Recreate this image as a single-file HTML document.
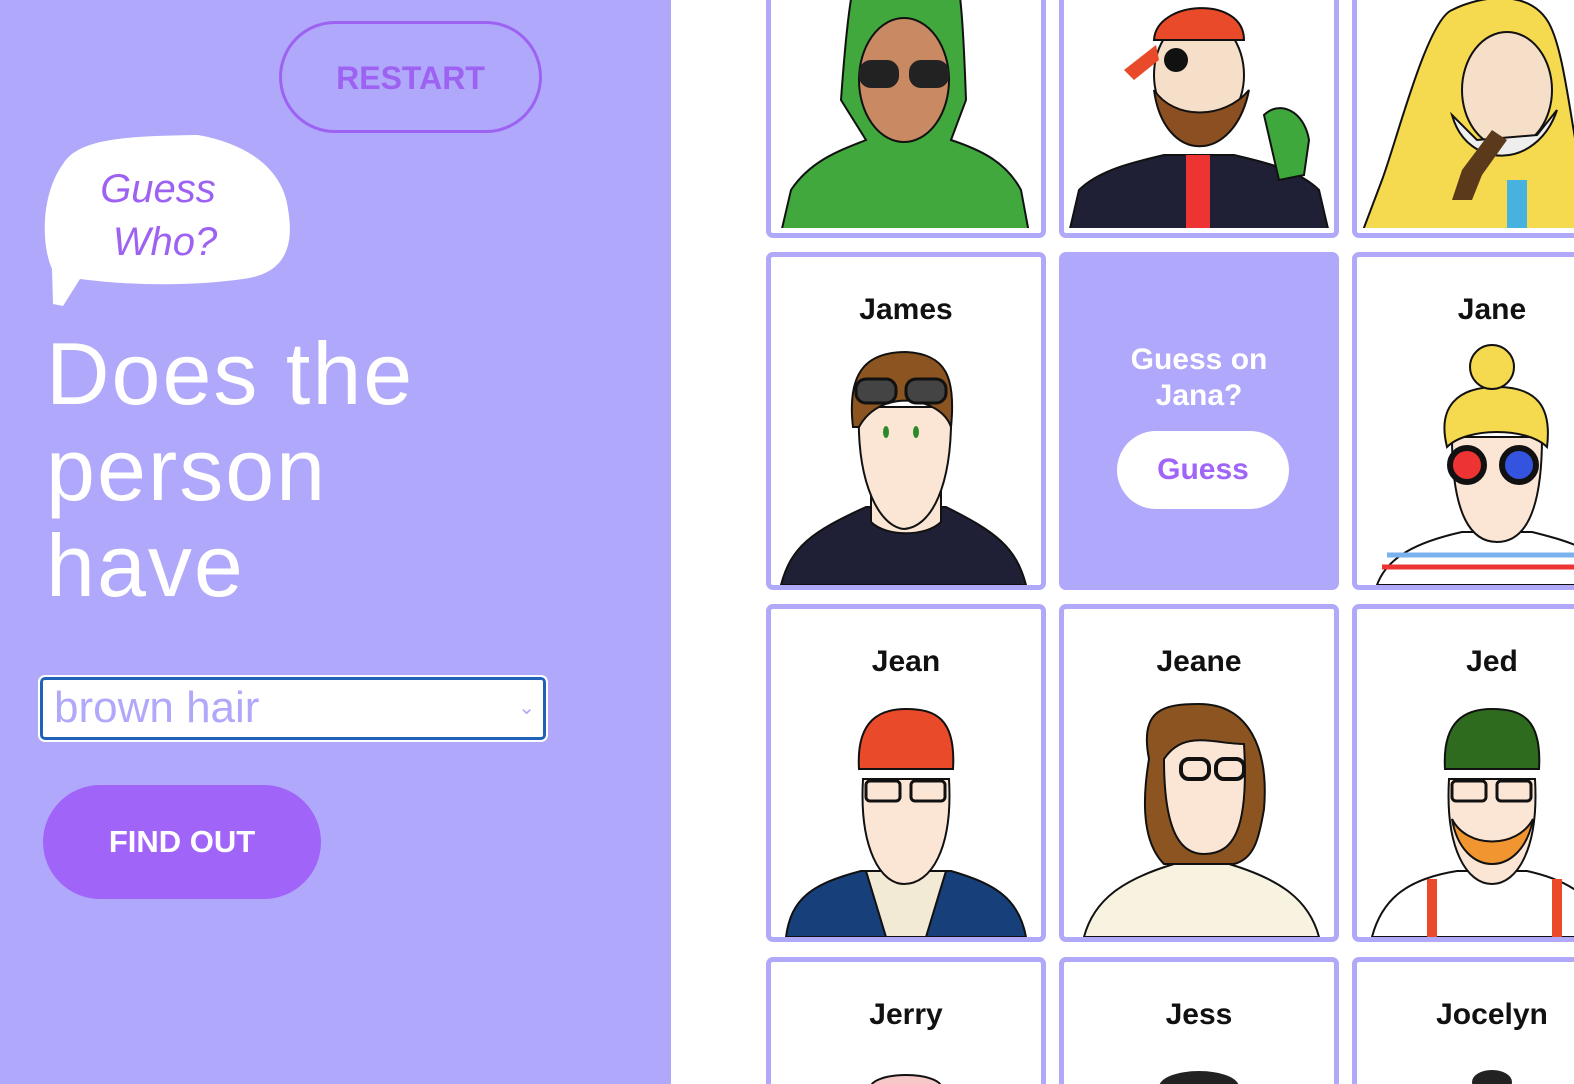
<!DOCTYPE html>
<html style="overflow:hidden;width:1574px;height:1084px"><head><meta charset="utf-8"><style>
body{margin:0;width:1574px;height:1084px;overflow:hidden;background:#fff;font-family:"Liberation Sans",sans-serif;position:relative}
.left{position:absolute;left:0;top:0;width:671px;height:1084px;background:#b0a8fa}
.restart{position:absolute;left:279px;top:21px;width:263px;height:112px;border:3px solid #9d62f2;border-radius:56px;box-sizing:border-box;color:#9d62f2;font-weight:bold;font-size:32px;text-align:center;line-height:108px}
.bubble{position:absolute;left:43px;top:134px}
h1{position:absolute;left:46px;top:326px;margin:0;color:#fff;font-weight:normal;font-size:88px;line-height:96px;letter-spacing:2px}
.sel{position:absolute;left:40px;top:677px;width:506px;height:63px;box-sizing:border-box;border:3px solid #1f62b8;outline:2px solid #fff;border-radius:5px;background:#fff;color:#b0a8fa;font-size:44px;line-height:56px;padding-left:11px}
.sel span{position:absolute;right:8px;top:0;font-size:20px;color:#b0a8fa}
.find{position:absolute;left:43px;top:785px;width:278px;height:114px;border-radius:57px;background:#a064f8;color:#fff;font-weight:bold;font-size:31px;text-align:center;line-height:114px}
.card{position:absolute;width:280px;height:338px;box-sizing:border-box;border:5px solid #b0a8f8;border-radius:7px;background:#fff;overflow:hidden}
.top{top:0;height:238px;border-top:none;border-radius:0 0 7px 7px}
.top svg{top:-100px!important}
.bot{top:957px;height:127px;border-bottom:none;border-radius:7px 7px 0 0}
.card .n{position:absolute;left:0;right:0;top:36px;text-align:center;font-weight:bold;font-size:30px;color:#111}
.card svg{position:absolute;left:0;top:0}
.g{background:#b0a8fa}
.g .q{position:absolute;left:0;right:0;top:85px;text-align:center;color:#fff;font-weight:bold;font-size:30px;line-height:36px}
.g .b{position:absolute;left:53px;top:174px;width:172px;height:78px;border-radius:39px;background:#fff;color:#a064f8;font-weight:bold;font-size:30px;text-align:center;line-height:78px}
.clip{position:absolute;left:0;top:0;width:1574px;height:1084px;overflow:hidden}
</style></head><body>
<div class="clip">
<div class="left">
<div class="restart">RESTART</div>
<svg class="bubble" width="252" height="172" viewBox="0 0 252 172"><path d="M20 30 C35 5 80 2 155 1 C205 10 240 35 245 75 C252 115 240 140 200 145 C150 152 90 152 37 145 L20 172 L10 170 L9 135 C-2 110 -2 60 20 30Z" fill="#fff"/><text x="115" y="68" text-anchor="middle" font-family="Liberation Sans" font-style="italic" font-size="40" fill="#9d62f2">Guess</text><text x="122" y="121" text-anchor="middle" font-family="Liberation Sans" font-style="italic" font-size="40" fill="#9d62f2">Who?</text></svg>
<h1>Does the<br>person<br>have</h1>
<div class="sel">brown hair<span>&#8964;</span></div>
<div class="find">FIND OUT</div>
</div>

<div class="card top" style="left:766px"><svg width="270" height="328"><path d="M10 333 L20 290 C40 260 70 250 95 240 L70 200 C80 60 90 20 135 20 C185 20 190 60 195 200 L180 240 C210 250 235 262 250 290 L258 333Z" fill="#40a83c" stroke="#111" stroke-width="2"/><ellipse cx="133" cy="180" rx="45" ry="62" fill="#c98a63" stroke="#111" stroke-width="2"/><rect x="88" y="160" width="40" height="28" rx="12" fill="#222"/><rect x="138" y="160" width="40" height="28" rx="12" fill="#222"/></svg></div>
<div class="card top" style="left:1059px"><svg width="270" height="328"><path d="M5 333 L15 290 C35 270 70 262 100 255 L170 255 C200 262 235 270 255 290 L265 333Z" fill="#1f2035" stroke="#111" stroke-width="2"/><rect x="122" y="255" width="24" height="78" fill="#e33"/><ellipse cx="135" cy="175" rx="45" ry="58" fill="#f6dfc8" stroke="#111" stroke-width="2"/><path d="M90 190 C100 265 170 265 185 190 C160 220 110 220 90 190Z" fill="#8b4f22" stroke="#111" stroke-width="2"/><path d="M90 140 C92 100 180 95 180 140Z" fill="#e84a2a" stroke="#111" stroke-width="2"/><path d="M92 145 L60 170 L70 180 L95 160Z" fill="#e84a2a"/><circle cx="112" cy="160" r="12" fill="#111"/><path d="M200 215 C215 200 240 210 245 240 L240 275 L215 280Z" fill="#3fa83c" stroke="#111" stroke-width="2"/></svg></div>
<div class="card top" style="left:1352px"><svg width="270" height="328"><path d="M5 333 L25 280 C40 240 70 120 95 110 C125 95 170 90 190 120 C210 150 215 250 230 290 L240 333Z" fill="#f5d94e" stroke="#111" stroke-width="2"/><ellipse cx="150" cy="190" rx="45" ry="58" fill="#f6dfc8" stroke="#111" stroke-width="2"/><path d="M95 215 C110 270 180 270 200 210 L180 235 L120 240Z" fill="#eee" stroke="#111" stroke-width="2"/><rect x="150" y="280" width="20" height="53" fill="#47b2e0"/><path d="M135 230 L105 270 L95 300 L115 300 L125 275 L150 240Z" fill="#5a3a1a"/></svg></div>

<div class="card" style="left:766px;top:252px"><div class="n">James</div><svg width="270" height="328"><path d="M10 328 C20 290 40 275 95 250 L175 250 C225 275 245 290 255 328Z" fill="#1f2035" stroke="#111" stroke-width="2"/><path d="M100 210 L100 265 C115 280 155 280 170 265 L170 210Z" fill="#fbe6d6" stroke="#111" stroke-width="2"/><path d="M88 150 C85 230 110 270 133 272 C160 270 182 230 180 150Z" fill="#fbe6d6" stroke="#111" stroke-width="2"/><path d="M82 170 C75 110 100 95 135 95 C175 97 185 120 180 170 C170 140 110 130 88 170Z" fill="#8b5420" stroke="#111" stroke-width="2"/><rect x="85" y="122" width="40" height="24" rx="10" fill="#444" stroke="#111" stroke-width="3"/><rect x="135" y="122" width="40" height="24" rx="10" fill="#444" stroke="#111" stroke-width="3"/><ellipse cx="115" cy="175" rx="3" ry="6" fill="#2a8a2a"/><ellipse cx="145" cy="175" rx="3" ry="6" fill="#2a8a2a"/></svg></div>
<div class="card g" style="left:1059px;top:252px;border-color:#b0a8fa"><div class="q">Guess on<br>Jana?</div><div class="b">Guess</div></div>
<div class="card" style="left:1352px;top:252px"><div class="n">Jane</div><svg width="270" height="328"><path d="M20 328 C30 300 60 285 105 275 L175 275 C215 285 250 295 260 328Z" fill="#fff" stroke="#111" stroke-width="2"/><path d="M25 310 L265 310" stroke="#e33" stroke-width="5"/><path d="M30 298 L255 298" stroke="#7ab2ee" stroke-width="5"/><path d="M95 180 C95 260 115 285 140 285 C170 285 185 250 185 180Z" fill="#fbe6d6" stroke="#111" stroke-width="2"/><path d="M90 190 C80 150 100 130 140 130 C180 130 195 150 190 190 C170 170 110 170 90 190Z" fill="#f5d94e" stroke="#111" stroke-width="2"/><circle cx="135" cy="110" r="22" fill="#f5d94e" stroke="#111" stroke-width="2"/><circle cx="110" cy="208" r="17" fill="#e33" stroke="#111" stroke-width="6"/><circle cx="162" cy="208" r="17" fill="#3454e0" stroke="#111" stroke-width="6"/></svg></div>

<div class="card" style="left:766px;top:604px"><div class="n">Jean</div><svg width="270" height="328"><path d="M15 328 C20 290 40 275 90 262 L180 262 C225 275 248 290 255 328Z" fill="#173f7a" stroke="#111" stroke-width="2"/><path d="M95 262 L115 328 L155 328 L175 262Z" fill="#f3ead6" stroke="#111" stroke-width="2"/><path d="M92 170 C88 240 110 275 133 275 C160 275 182 240 178 170Z" fill="#fbe6d6" stroke="#111" stroke-width="2"/><path d="M88 160 C85 110 110 100 135 100 C165 100 185 110 182 160Z" fill="#e84a2a" stroke="#111" stroke-width="2"/><rect x="95" y="172" width="34" height="20" rx="4" fill="none" stroke="#111" stroke-width="3"/><rect x="140" y="172" width="34" height="20" rx="4" fill="none" stroke="#111" stroke-width="3"/></svg></div>
<div class="card" style="left:1059px;top:604px"><div class="n">Jeane</div><svg width="270" height="328"><path d="M20 328 C30 290 60 270 110 255 L165 255 C215 270 245 290 255 328Z" fill="#f8f3e0" stroke="#111" stroke-width="2"/><path d="M85 150 C75 100 100 95 135 95 C185 95 205 140 200 200 C195 230 190 250 170 255 L100 255 C75 230 80 180 85 150Z" fill="#8b5420" stroke="#111" stroke-width="2"/><path d="M100 150 C100 230 120 245 140 245 C170 245 185 220 180 135 C150 135 120 120 100 150Z" fill="#fbe6d6" stroke="#111" stroke-width="2"/><rect x="117" y="150" width="28" height="20" rx="8" fill="none" stroke="#111" stroke-width="4"/><rect x="152" y="150" width="28" height="20" rx="8" fill="none" stroke="#111" stroke-width="4"/></svg></div>
<div class="card" style="left:1352px;top:604px"><div class="n">Jed</div><svg width="270" height="328"><path d="M15 328 C25 290 50 270 100 262 L170 262 C215 272 240 290 250 328Z" fill="#fff" stroke="#111" stroke-width="2"/><rect x="70" y="270" width="10" height="58" fill="#e84a2a"/><rect x="195" y="270" width="10" height="58" fill="#e84a2a"/><path d="M92 170 C88 240 110 275 135 275 C160 275 182 240 178 170Z" fill="#fbe6d6" stroke="#111" stroke-width="2"/><path d="M95 210 C105 270 165 270 176 210 C160 240 110 240 95 210Z" fill="#f0952f" stroke="#111" stroke-width="2"/><path d="M88 160 C85 110 110 100 135 100 C165 100 185 110 182 160Z" fill="#2e6b1f" stroke="#111" stroke-width="2"/><rect x="95" y="172" width="34" height="20" rx="4" fill="none" stroke="#111" stroke-width="3"/><rect x="140" y="172" width="34" height="20" rx="4" fill="none" stroke="#111" stroke-width="3"/></svg></div>

<div class="card bot" style="left:766px"><div class="n">Jerry</div><svg width="270" height="122"><ellipse cx="135" cy="125" rx="35" ry="12" fill="#f7c8c8" stroke="#111" stroke-width="2"/></svg></div>
<div class="card bot" style="left:1059px"><div class="n">Jess</div><svg width="270" height="122"><ellipse cx="135" cy="125" rx="40" ry="16" fill="#222"/></svg></div>
<div class="card bot" style="left:1352px"><div class="n">Jocelyn</div><svg width="270" height="122"><ellipse cx="135" cy="120" rx="20" ry="12" fill="#222"/></svg></div>
</div>
</body></html>
